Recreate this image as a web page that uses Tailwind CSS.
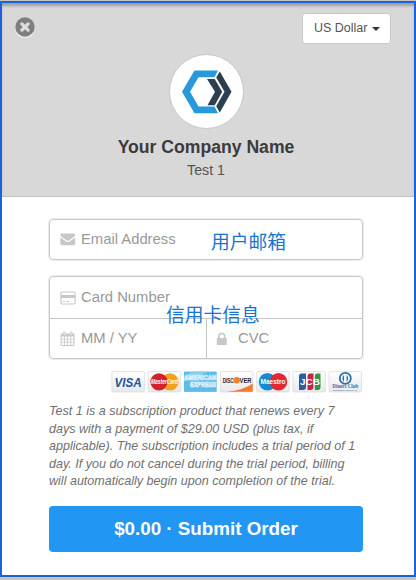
<!DOCTYPE html>
<html lang="en"><head><meta charset="utf-8"><title>Checkout</title>
<script src="https://cdn.jsdelivr.net/npm/@tailwindcss/browser@4"></script></head>
<body class="w-[416px] h-[580px] overflow-hidden bg-[#c4c4c2] pt-px font-['Liberation_Sans',Arial,sans-serif]">
<main class="relative w-full h-[576px] border-2 border-[#1d62dc] bg-white flex flex-col">
  <header class="relative h-[194px] shrink-0 border-b border-[#c2c2c2] bg-[#d8d8d8] flex flex-col items-center pt-[51px] shadow-[inset_0_4px_3px_-1px_#a0a0a0]">
    <svg class="absolute left-[13px] top-[14px]" width="21" height="22" viewBox="0 0 21 22"><circle cx="10" cy="11.2" r="9.8" fill="#f0f0f0"/><circle cx="10" cy="10" r="9.7" fill="#7f7f7f"/><path d="M6.9 6.9l6.2 6.2M13.1 6.9l-6.2 6.2" stroke="#dedede" stroke-width="3.3" stroke-linecap="round"/></svg>
    <button class="absolute left-[300px] top-[10px] w-[89px] h-[31px] rounded-[3px] border border-[#c9c9c9] bg-white flex items-center pl-[11px] gap-[4px] text-[12.5px] text-[#555]"><span class="whitespace-nowrap">US Dollar</span><span class="border-x-[4px] border-t-[4px] border-x-transparent border-t-[#333]"></span></button>
    <div class="ml-[-4px] w-[75px] h-[75px] rounded-full border border-[#c6c6c6] bg-white shrink-0">
      <svg width="73" height="73" viewBox="169.5 55.5 73 73"><path d="M194 71H217.5L214 77.8H198L189.5 92.3L198 107H214L217.5 113.8H194L181.5 92.3Z" fill="#2698dc"/><path d="M219.3 72L231 92.3L219.3 113L215.7 106.8L224 92.3L215.7 78Z" fill="#2c3e50"/><path d="M206.5 79.6H214.2L221.7 92.3L214.2 105.8H207L214.5 92.3Z" fill="#2c3e50"/></svg>
    </div>
    <h1 class="ml-[-4px] mt-[6px] h-[24px] leading-[24px] text-[17.6px] font-bold text-[#3b3b3b] whitespace-nowrap">Your Company Name</h1>
    <p class="ml-[-4px] h-[20px] leading-[22px] text-[14.2px] text-[#555]">Test 1</p>
  </header>
  <form class="px-[47px] pt-[22px] flex flex-col text-[14.8px] text-[#999]">
    <label class="relative w-[314px] h-[41px] rounded-[4px] border border-[#c8c8c8] shadow-[0_0_0_1px_#cacaca55] flex items-center pl-[10px]">
      <svg width="16" height="13" viewBox="0 0 16 13" fill="#c8c8c8"><path d="M1.5 0.5H14Q15.2 .6 15.2 1.9Q15 3.2 13.5 4.3L8.8 7.4Q7.8 8 6.7 7.4L1.8 4.1Q.3 3 .3 1.8Q.4 .5 1.5 .5Z"/><path d="M.3 4.3Q3 6.5 6.1 8.4Q7.8 9.5 9.5 8.4L15.2 4.5V10.8Q15.2 12.2 13.8 12.2H1.7Q.3 12.2 .3 10.8Z"/></svg>
      <span class="ml-[5px]">Email Address</span>
      <span class="absolute left-[161px] top-[7px] leading-[28px] text-[18.8px] text-[#1873d1] font-['Noto_Sans_CJK_SC',sans-serif] whitespace-nowrap" lang="zh">用户邮箱</span>
    </label>
    <div class="relative mt-[16px] w-[314px] h-[83px] rounded-[4px] border border-[#c8c8c8] shadow-[0_0_0_1px_#cacaca55] flex flex-col">
      <label class="h-[42px] border-b border-[#c6c6c6] flex items-center pl-[10px]">
        <svg width="16" height="14" viewBox="0 0 16 14"><rect x=".9" y="1" width="14.2" height="12" rx="1.2" fill="none" stroke="#c8c8c8" stroke-width="1.2"/><path d="M1 4H15V7H1ZM3 10H5V11.1H3ZM6 10H9V11.1H6Z" fill="#c8c8c8"/></svg>
        <span class="ml-[5px]">Card Number</span>
      </label>
      <div class="flex h-[39px]">
        <label class="w-[157px] border-r border-[#c6c6c6] flex items-center pl-[10px]">
          <svg width="16" height="16" viewBox="0 0 16 16"><path fill="#c8c8c8" fill-rule="evenodd" d="M1.5 2.5H3V1.3Q3 .4 4.2 .4T5.4 1.3V2.5H10V1.3Q10 .4 11.2 .4T12.4 1.3V2.5H13.5Q14.6 2.5 14.6 3.6V14Q14.6 15 13.5 15H1.7Q.6 15 .6 14V3.6Q.6 2.5 1.5 2.5ZM1.7 5.5V7.7H4V5.5ZM4.8 5.5V7.7H7.2V5.5ZM8 5.5V7.7H10.4V5.5ZM11.2 5.5V7.7H13.5V5.5ZM1.7 8.5V10.8H4V8.5ZM4.8 8.5V10.8H7.2V8.5ZM8 8.5V10.8H10.4V8.5ZM11.2 8.5V10.8H13.5V8.5ZM1.7 11.6V14H4V11.6ZM4.8 11.6V14H7.2V11.6ZM8 11.6V14H10.4V11.6ZM11.2 11.6V14H13.5V11.6Z"/><path d="M4.2 1.3V4M11.2 1.3V4" stroke="#fff" stroke-width=".7"/></svg>
          <span class="ml-[5px]">MM / YY</span>
        </label>
        <label class="flex items-center pl-[9px]">
          <svg width="12" height="14" viewBox="0 0 12 14"><rect x=".8" y="6" width="10" height="7" rx="1" fill="#c8c8c8"/><path d="M2.9 6.5V4.2Q2.9 1.5 5.8 1.5T8.7 4.2V6.5" fill="none" stroke="#c8c8c8" stroke-width="1.7"/></svg>
          <span class="ml-[10px]">CVC</span>
        </label>
      </div>
      <span class="absolute left-[116px] top-[23px] leading-[28px] text-[18.8px] text-[#1873d1] font-['Noto_Sans_CJK_SC',sans-serif] whitespace-nowrap" lang="zh">信用卡信息</span>
    </div>
  </form>
  <div class="mt-[12px] ml-[109px] h-[22px]">
    <svg width="252" height="22" viewBox="0 0 252 22" font-family="Liberation Sans, Arial" font-weight="bold" text-anchor="middle">
      <defs><linearGradient id="g" x2="0" y2="1"><stop stop-color="#fff"/><stop offset="1" stop-color="#e8e9eb"/></linearGradient></defs>
      <g fill="url(#g)" stroke="#dadbdd" stroke-width=".8"><rect x=".9" y=".6" width="32.5" height="20.3" rx="1"/><rect x="37.2" y=".6" width="32.5" height="20.3" rx="1"/><rect x="109.4" y=".6" width="32.5" height="20.3" rx="1"/><rect x="145.7" y=".6" width="32.5" height="20.3" rx="1"/><rect x="181.8" y=".6" width="32.5" height="20.3" rx="1"/><rect x="218" y=".6" width="32.5" height="20.3" rx="1"/></g>
      <text x="17" y="15.5" font-size="13" font-style="italic" fill="#19569b" textLength="27" lengthAdjust="spacingAndGlyphs">VISA</text>
      <circle cx="59" cy="10.8" r="8.6" fill="#f6a11d"/><circle cx="48" cy="10.8" r="8.6" fill="#d6202b"/>
      <text x="53.5" y="13" font-size="6.5" font-style="italic" fill="#fff" textLength="27" lengthAdjust="spacingAndGlyphs">MasterCard</text>
      <rect x="73" y=".6" width="32.7" height="20.3" fill="#5dbbe9"/><path d="M73 5L82 .6H98L73 11Z" fill="#83cef1"/>
      <g font-size="6.5" fill="#5dbbe9" stroke="#e6f6fd" stroke-width=".65"><text x="89.3" y="9.3" textLength="32" lengthAdjust="spacingAndGlyphs">AMERICAN</text><text x="92" y="16.3" textLength="26" lengthAdjust="spacingAndGlyphs">EXPRESS</text></g>
      <path d="M141.7 12.5V20.8H116Q134 18.5 141.7 12.5Z" fill="#f47a2b"/><circle cx="125.7" cy="9.3" r="3.2" fill="#f28229"/>
      <g font-size="6.8" fill="#2c2522"><text x="117.2" y="11.7" textLength="11" lengthAdjust="spacingAndGlyphs">DISC</text><text x="134.5" y="11.7" textLength="12" lengthAdjust="spacingAndGlyphs">VER</text></g>
      <circle cx="156.5" cy="10.8" r="8.8" fill="#168bd1"/><circle cx="167.5" cy="10.8" r="8.8" fill="#e32832"/>
      <text x="162" y="13.2" font-size="7" fill="#fff" textLength="25" lengthAdjust="spacingAndGlyphs">Maestro</text>
      <path d="M190 2.5H195V16Q195 19 192 19H188V5Q188 2.5 190 2.5Z" fill="#2b5ba4"/><path d="M199 2.5H202.5V16Q202.5 19 199.5 19H196.5V5Q196.5 2.5 199 2.5Z" fill="#bf2849"/><path d="M206 2.5H209.5V16Q209.5 19 207 19H203.8V5Q203.8 2.5 206 2.5Z" fill="#36953e"/>
      <text x="199" y="13.6" font-size="8.5" fill="#fff" textLength="20" lengthAdjust="spacingAndGlyphs">JCB</text>
      <circle cx="234.3" cy="7.3" r="5.5" fill="#fff" stroke="#2d70ac" stroke-width="1.8"/><path d="M233 3.7Q229.8 7.3 233 11ZM235.6 3.7Q238.8 7.3 235.6 11Z" fill="#2d70ac"/>
      <g fill="#2d70ac" font-family="Liberation Serif"><text x="234.3" y="17" font-size="6" textLength="26" lengthAdjust="spacingAndGlyphs">Diners Club</text><text x="234.3" y="20" font-size="2.8" textLength="25" lengthAdjust="spacingAndGlyphs">INTERNATIONAL</text></g>
    </svg>
  </div>
  <p class="ml-[47px] mt-[10px] h-[87px] text-[12.55px] leading-[17.5px] italic text-[#707070] whitespace-nowrap">Test 1 is a subscription product that renews every 7<br>days with a payment of $29.00 USD (plus tax, if<br>applicable). The subscription includes a trial period of 1<br>day. If you do not cancel during the trial period, billing<br>will automatically begin upon completion of the trial.</p>
  <button class="ml-[47px] mt-[16px] w-[314px] h-[46px] shrink-0 rounded-[4px] bg-[#2196f3] text-white text-[18.8px] font-bold whitespace-nowrap">$0.00 · Submit Order</button>
</main>
</body></html>
